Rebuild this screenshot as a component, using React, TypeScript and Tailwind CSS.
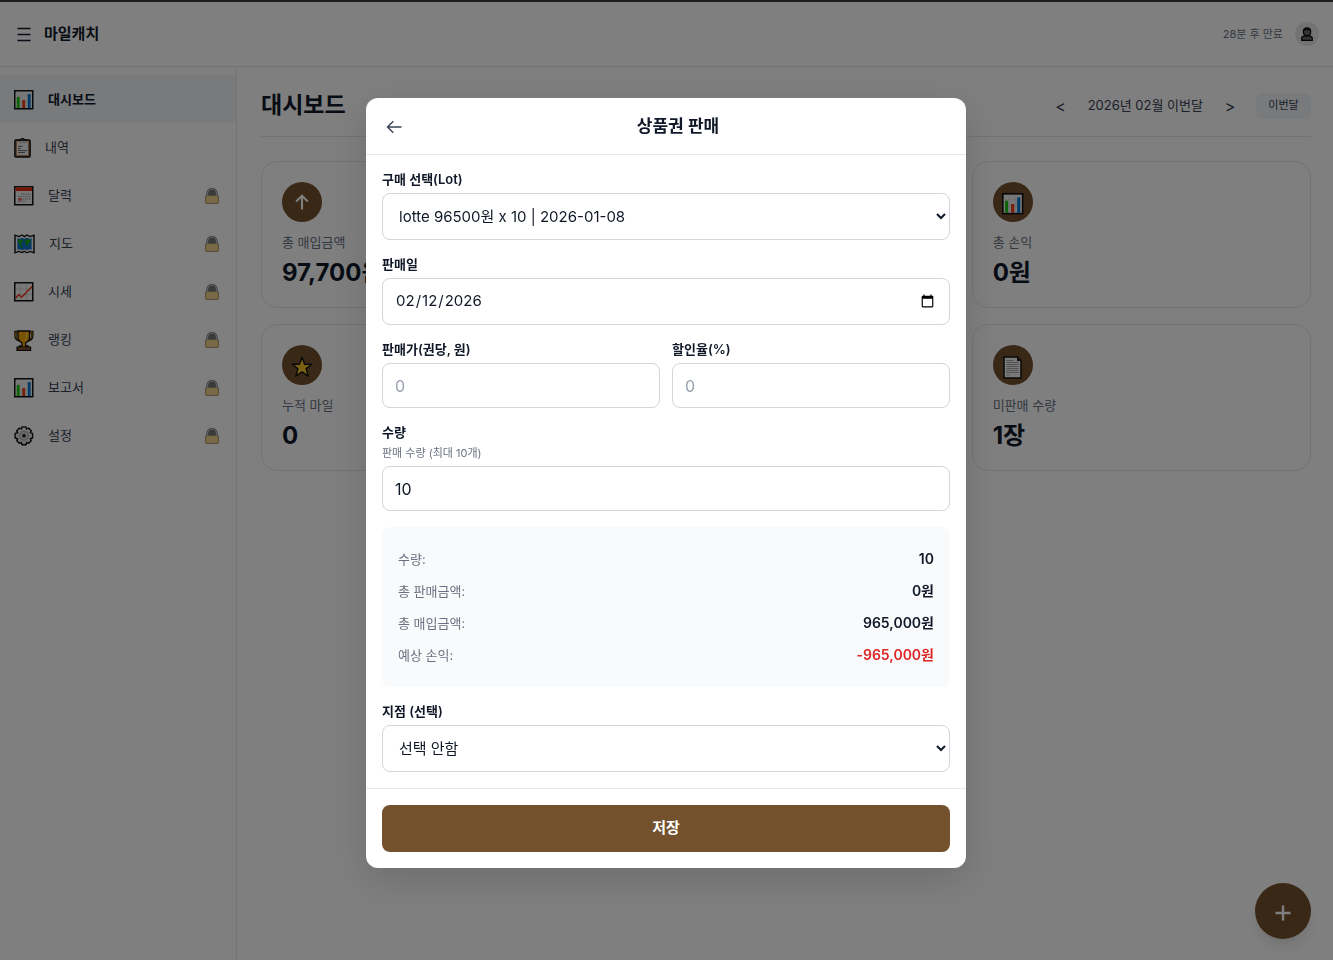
import { useState } from "react"
import type { ReactNode } from "react"

const ChartIcon = ({ className = "w-5 h-5" }: { className?: string }) => (
  <svg className={className} viewBox="0 0 20 20" aria-hidden="true">
    <rect x="0.75" y="0.75" width="18" height="18" fill="#f3f3f3" stroke="#111" strokeWidth="1.5" />
    <path d="M7 1.5v16.5M12.5 1.5v16.5M1.5 6h16.5M1.5 12h16.5" stroke="#dcdcdc" strokeWidth="0.7" />
    <rect x="2.8" y="7" width="2.8" height="11" fill="#16c60c" />
    <rect x="8.3" y="10" width="2.8" height="8" fill="#f03a17" />
    <rect x="13.8" y="4" width="2.8" height="14" fill="#0078d4" />
  </svg>
)

const ClipboardIcon = () => (
  <svg className="w-[17px] h-5" viewBox="0 0 17 20" aria-hidden="true">
    <rect x="0.9" y="1.9" width="15.2" height="17.2" rx="1" fill="#b5835a" stroke="#111" strokeWidth="1.5" />
    <rect x="3" y="3.500" width="11" height="13.500" fill="#f0f0f0" />
    <path d="M4.500 3h8v2.500h-8z" fill="#ccc" />
    <path d="M4 1.900h2.600a2 2 0 0 1 3.800 0H13" fill="none" stroke="#111" strokeWidth="1.2" />
    <path d="M4 8.300h4.500M4 10.600h3M4 12.600h9M4 14.600h7" stroke="#555" strokeWidth="0.9" />
  </svg>
)

const CalendarIcon = () => (
  <svg className="w-5 h-5" viewBox="0 0 20 20" aria-hidden="true">
    <rect x="0.75" y="0.75" width="18" height="18" fill="#f3f3f3" stroke="#111" strokeWidth="1.5" />
    <rect x="1.5" y="1.5" width="16.5" height="3.5" fill="#e8290f" />
    <path d="M7 8h9.5M4 10.5h12.5M4 13h12.5M4 15.5h8" stroke="#aaa" strokeWidth="1.3" strokeDasharray="1.4 0.8" />
    <circle cx="6" cy="13.3" r="1.6" fill="#f05a40" />
  </svg>
)

const MapIcon = () => (
  <svg className="w-[21px] h-5" viewBox="0 0 21 20" aria-hidden="true">
    <path
      d="M1 1.2l4 1.4 3-1.6 2.5 1.6L13 1l3 1.6 4-1.4v17.6l-4-1.4-3 1.4-2.5-1.4L8 18.6l-3-1.2-4 1.4z"
      fill="#f3f3f3"
      stroke="#111"
      strokeWidth="1.4"
    />
    <path d="M3.4 4.200l2 .6L8 3.700l2.500 1L13 3.700l2.600 1.100 2-.6v11.600l-2-.6-2.600 1-2.500-1-2.500 1-2.600-1-2 .6z" fill="#0f72c9" />
    <path d="M4 5.400l3.500.2 1.600 1.400-1.700 1.800-.6 1.600 1.700 1.200-.8 2.600-1.400-1.600-.4-2.400L4.300 8zM11.500 5.600l3.500-.4 1.800 1.400-1 2.600-1.400-.3-.7 3-1.500-.6-.4-2.300-1.200-1.200z" fill="#16a60c" />
  </svg>
)

const TrendIcon = () => (
  <svg className="w-5 h-5" viewBox="0 0 20 20" aria-hidden="true">
    <rect x="0.75" y="0.75" width="18" height="18" fill="#f3f3f3" stroke="#111" strokeWidth="1.5" />
    <path d="M6.5 1.5v16.5M12.5 1.5v16.5M1.5 7h16.5M1.5 12.5h16.5" stroke="#cfcfcf" strokeWidth="0.8" />
    <path d="M1.8 16l3-3.200 3 2.200L18 4.500" fill="none" stroke="#f03a17" strokeWidth="1.5" />
  </svg>
)

const TrophyIcon = () => (
  <svg className="w-5 h-[21px]" viewBox="0 0 20 21" aria-hidden="true">
    <path d="M5 2H1.500v4C1.500 8.500 3.500 10 6 10.500M14.500 2h3.800v4c0 2.500-2.100 4-4.600 4.500" fill="none" stroke="#111" strokeWidth="2.4" />
    <path d="M5 2.200H1.700V6c0 2.300 1.800 3.600 4 4M14.500 2.200h3.500V6c0 2.300-1.800 3.600-4 4" fill="none" stroke="#f0a500" strokeWidth="0.8" />
    <path d="M4 1h11.600v5.500c0 3.500-1.800 5.500-4 6.300V16h2.600l.8 3.800H4.600l.8-3.800H8v-3.200C5.800 12 4 10 4 6.500z" fill="#f0a500" stroke="#111" strokeWidth="1.3" />
    <path d="M3 17h13.600v3.300H3z" fill="#8e562e" stroke="#111" strokeWidth="1.2" />
    <path d="M12.600 3v4c0 1.500-.6 2.500-1.600 3.500" fill="none" stroke="#ffd35a" strokeWidth="1.3" />
  </svg>
)

const GearIcon = () => (
  <svg className="w-5 h-5" viewBox="0 0 20 20" aria-hidden="true">
    <path
      d="M8 .9h4l.6 2.100 1.900-1 2.800 2.800-1 1.900 2.300.7V12l-2.300.7 1 1.900-2.800 2.800-1.900-1-.6 2.300H8l-.6-2.300-1.900 1-2.800-2.800 1-1.900L1.100 12V7.400l2.600-.7-1-1.900L5.500 2l1.900 1z"
      fill="#e4e4e4"
      stroke="#111"
      strokeWidth="1.4"
      strokeLinejoin="round"
    />
    <circle cx="10" cy="9.8" r="4.5" fill="#cfcfcf" stroke="#999" strokeWidth="0.8" />
    <circle cx="10" cy="9.8" r="1.7" fill="#111" />
  </svg>
)

const LockIcon = () => (
  <svg className="w-[14px] h-4 opacity-70" viewBox="0 0 14 16" aria-label="잠김">
    <path d="M2.500 8V5.500a4.500 4.500 0 0 1 9 0V8z" fill="#3a3a3a" stroke="#333" strokeWidth="2.2" />
    <path d="M2.600 8V5.400a4.400 4.400 0 0 1 8.800 0V8" fill="none" stroke="#aaa" strokeWidth="1.1" />
    <rect x="0.6" y="7.5" width="12.8" height="8" rx="0.8" fill="#e8be5c" stroke="#6b5d38" strokeWidth="0.9" />
  </svg>
)

const StarIcon = () => (
  <svg className="w-[22px] h-[22px] mt-1" viewBox="0 0 22 22" aria-hidden="true">
    <path d="M11 1.2l2.600 7h7.200l-5.700 4.400 2.100 7.600L11 15.900l-6.200 4.300 2.100-7.600L1.200 8.200h7.200z" fill="#f7c325" stroke="#111" strokeWidth="1.4" strokeLinejoin="round" />
  </svg>
)

const PageIcon = () => (
  <svg className="w-[19px] h-[23px] mt-1" viewBox="0 0 19 23" aria-hidden="true">
    <path d="M1 1h13.500L18 4.500V22H1z" fill="#f3f3f3" stroke="#111" strokeWidth="1.5" />
    <path d="M14 1.500V5h3.500z" fill="#111" />
    <path d="M3.500 4.500h7M3.500 6.500h12M3.500 8.500h12M3.500 10.500h12M3.500 12.500h12M3.500 14.500h12M3.500 16.500h12M3.500 19h3" stroke="#9a9a9a" strokeWidth="0.9" />
  </svg>
)

const PersonIcon = () => (
  <svg className="w-3 h-[14px]" viewBox="0 0 12 14" aria-hidden="true">
    <path d="M.7 13.300v-1.800c0-1.600 1-2.300 2.800-2.600h5c1.800.3 2.800 1 2.800 2.600v1.800z" fill="#666" stroke="#0a0a0a" strokeWidth="1.2" />
    <path d="M6 .8c2.400 0 3.700 1.500 3.700 3.700C9.700 6.900 8.300 8.900 6 8.900S2.300 6.900 2.300 4.500C2.300 2.300 3.600.8 6 .8z" fill="#666" stroke="#0a0a0a" strokeWidth="1.2" />
    <path d="M3 3.200C4 2 8 2 9 3.200" fill="none" stroke="#0a0a0a" strokeWidth="1.5" />
  </svg>
)

const BackIcon = () => (
  <svg className="w-4 h-[14px]" viewBox="0 0 16 14" fill="none" stroke="currentColor" strokeWidth="1.4" aria-hidden="true">
    <path d="M15.5 7H1.500M7.300 1.200L1.500 7l5.800 5.800" />
  </svg>
)

const UpIcon = () => (
  <svg className="w-[14px] h-4 text-white" viewBox="0 0 14 16" fill="none" stroke="currentColor" strokeWidth="2.1" aria-hidden="true">
    <path d="M7 15.500V2M1.200 7.500L7 1.700l5.800 5.800" />
  </svg>
)

const menu: { label: string; icon: ReactNode; locked?: boolean; active?: boolean }[] = [
  { label: "대시보드", icon: <ChartIcon />, active: true },
  { label: "내역", icon: <ClipboardIcon /> },
  { label: "달력", icon: <CalendarIcon />, locked: true },
  { label: "지도", icon: <MapIcon />, locked: true },
  { label: "시세", icon: <TrendIcon />, locked: true },
  { label: "랭킹", icon: <TrophyIcon />, locked: true },
  { label: "보고서", icon: <ChartIcon />, locked: true },
  { label: "설정", icon: <GearIcon />, locked: true },
]

const stats = [
  { label: "총 매입금액", value: "97,700원", icon: <UpIcon />, col: "col-start-1" },
  { label: "총 손익", value: "0원", icon: <ChartIcon className="w-[22px] h-[22px] mt-1" />, col: "col-start-3" },
  { label: "누적 마일", value: "0", icon: <StarIcon />, col: "col-start-1" },
  { label: "미판매 수량", value: "1장", icon: <PageIcon />, col: "col-start-3" },
]

const summary = [
  { label: "수량:", value: "10" },
  { label: "총 판매금액:", value: "0원" },
  { label: "총 매입금액:", value: "965,000원" },
  { label: "예상 손익:", value: "-965,000원", loss: true },
]

const control = "w-full rounded-lg border border-gray-300 bg-white px-3 text-gray-900 placeholder:text-gray-400"

function Field({ id, label, hint, children }: { id: string; label: string; hint?: string; children: ReactNode }) {
  return (
    <div className="flex flex-col gap-1.5 min-w-0">
      <label htmlFor={id} className="text-[13px] leading-4 font-semibold">{label}</label>
      {hint && <p className="text-[11px] leading-[14px] text-gray-500">{hint}</p>}
      {children}
    </div>
  )
}

function SaleDialog() {
  const [date, setDate] = useState("2026-02-12")
  const [price, setPrice] = useState("")
  const [discount, setDiscount] = useState("")
  const [quantity, setQuantity] = useState("10")

  return (
    <div className="fixed inset-0 flex items-center justify-center bg-black/50 pt-1.5 pr-px">
      <div role="dialog" aria-modal="true" aria-labelledby="sale-title" className="w-full max-w-[600px] rounded-xl bg-white shadow-[0_12px_40px_rgba(0,0,0,0.15)]">
        <header className="grid grid-cols-[40px_1fr_16px] items-center h-[57px] px-2 pt-0.5 border-b border-gray-200">
          <button type="button" aria-label="뒤로" className="flex h-10 w-10 items-center justify-center text-gray-700">
            <BackIcon />
          </button>
          <h2 id="sale-title" className="text-center text-[17px] font-semibold">상품권 판매</h2>
        </header>

        <form className="flex flex-col gap-4 p-4">
          <Field id="lot" label="구매 선택(Lot)">
            <select id="lot" className={`${control} h-[47px] text-[15px]`}>
              <option>lotte 96500원 x 10 | 2026-01-08</option>
            </select>
          </Field>
          <Field id="date" label="판매일">
            <input id="date" type="date" value={date} onChange={(e) => setDate(e.target.value)} className={`${control} h-[47px] text-[15px]`} />
          </Field>
          <div className="grid grid-cols-2 gap-3">
            <Field id="price" label="판매가(권당, 원)">
              <input id="price" type="number" placeholder="0" value={price} onChange={(e) => setPrice(e.target.value)} className={`${control} h-[45px] text-[16px]`} />
            </Field>
            <Field id="discount" label="할인율(%)">
              <input id="discount" type="number" placeholder="0" value={discount} onChange={(e) => setDiscount(e.target.value)} className={`${control} h-[45px] text-[16px]`} />
            </Field>
          </div>
          <Field id="quantity" label="수량" hint="판매 수량 (최대 10개)">
            <input id="quantity" type="number" value={quantity} onChange={(e) => setQuantity(e.target.value)} className={`${control} h-[45px] text-[16px]`} />
          </Field>
          <dl className="rounded-lg bg-gray-50 p-4 text-[13px] leading-8">
            {summary.map((row) => (
              <div key={row.label} className="flex h-8 justify-between">
                <dt className="text-gray-500">{row.label}</dt>
                <dd className={row.loss ? "text-[14px] font-semibold text-[#dc2626]" : "text-[14px] font-semibold"}>{row.value}</dd>
              </div>
            ))}
          </dl>
          <Field id="branch" label="지점 (선택)">
            <select id="branch" className={`${control} h-[47px] text-[15px]`}>
              <option>선택 안함</option>
            </select>
          </Field>
        </form>

        <footer className="border-t border-gray-200 p-4">
          <button type="button" className="h-[47px] w-full rounded-lg bg-[#74512d] text-[15px] font-semibold text-white">저장</button>
        </footer>
      </div>
    </div>
  )
}

export default function App() {
  return (
    <div className="flex min-h-screen flex-col border-t-2 border-[#3c3c3c] bg-white font-['Inter','Noto_Sans_CJK_KR',sans-serif] text-gray-900">
      <header className="flex h-[65px] items-center justify-between border-b border-gray-200 pl-4 pr-[14px]">
        <div className="flex items-center gap-3">
          <button type="button" aria-label="메뉴">
            <svg className="w-4 h-4" viewBox="0 0 16 16" stroke="currentColor" strokeWidth="1.3">
              <path d="M1.5 2.500h13M1.500 8.500h13M1.500 14.500h13" />
            </svg>
          </button>
          <span className="text-[15px] font-semibold">마일캐치</span>
        </div>
        <div className="flex items-center gap-3">
          <span className="text-[11px] text-gray-500">28분 후 만료</span>
          <button type="button" aria-label="프로필" className="flex h-6 w-6 items-center justify-center rounded-full bg-gray-200">
            <PersonIcon />
          </button>
        </div>
      </header>

      <div className="flex flex-1">
        <nav className="w-[237px] shrink-0 border-r border-gray-200 pt-2">
          {menu.map((item) => (
            <a
              key={item.label}
              href="#"
              className={`flex h-12 items-center gap-[14px] pt-0.5 pl-[14px] pr-[17px] text-[13px] ${item.active ? "bg-slate-100 font-semibold" : "text-gray-700"}`}
            >
              {item.icon}
              <span className="flex-1">{item.label}</span>
              {item.locked && <LockIcon />}
            </a>
          ))}
        </nav>

        <main className="min-w-0 flex-1 pl-6 pr-[22px]">
          <div className="flex h-[70px] items-center justify-between border-b border-gray-200 pt-2">
            <h1 className="text-[23px] font-bold">대시보드</h1>
            <div className="flex items-center text-gray-700">
              <button type="button" aria-label="이전 달" className="w-8 text-center text-[16px]">&lt;</button>
              <span className="px-[11px] text-[13px]">2026년 02월 이번달</span>
              <button type="button" aria-label="다음 달" className="w-8 text-center text-[16px]">&gt;</button>
              <button type="button" className="ml-2.5 h-[26px] w-[55px] rounded-md bg-slate-100 text-[11px]">이번달</button>
            </div>
          </div>

          <section className="grid grid-cols-3 gap-4 pt-6">
            {stats.map((stat) => (
              <article key={stat.label} className={`${stat.col} h-[147px] rounded-2xl border border-gray-200 p-5`}>
                <div className="flex h-10 w-10 items-center justify-center rounded-full bg-[#74512d]">{stat.icon}</div>
                <p className="mt-2.5 text-[13px] leading-5 text-gray-500">{stat.label}</p>
                <p className="mt-1 text-[24px] leading-[34px] font-bold">{stat.value}</p>
              </article>
            ))}
          </section>
        </main>
      </div>

      <button type="button" aria-label="추가" className="fixed right-[22px] bottom-[21px] flex h-14 w-14 items-center justify-center rounded-full bg-[#74512d] text-white shadow-lg">
        <svg className="mt-1 w-4 h-4" viewBox="0 0 16 16" stroke="currentColor" strokeWidth="2.4">
          <path d="M8 .5v15M.5 8h15" />
        </svg>
      </button>

      <SaleDialog />
    </div>
  )
}
